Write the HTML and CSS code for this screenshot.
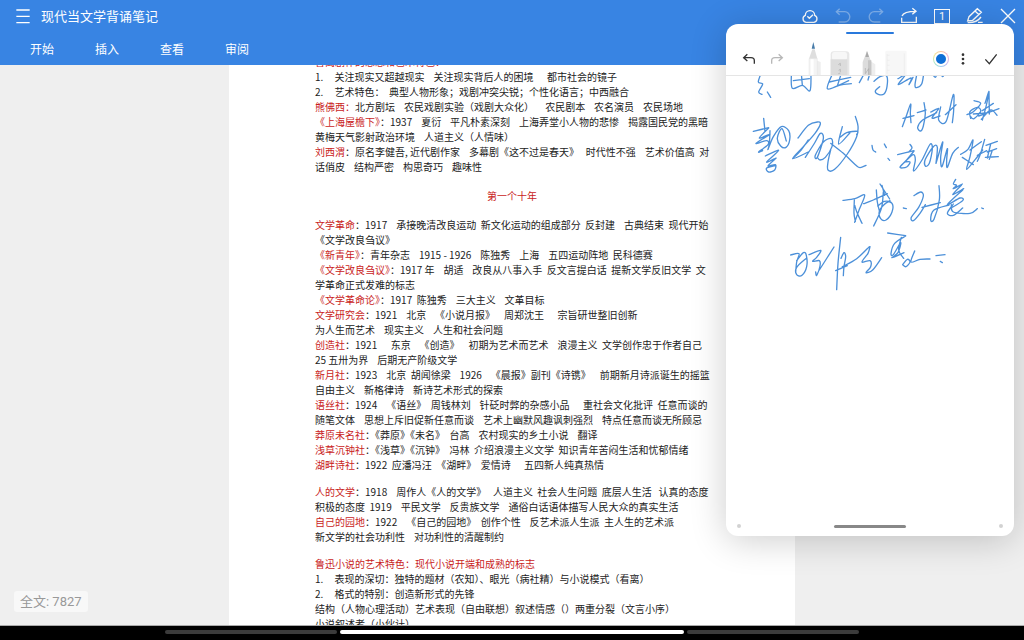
FILE: index.html
```
<!DOCTYPE html>
<html lang="zh-CN">
<head>
<meta charset="utf-8">
<title>现代当文学背诵笔记</title>
<link rel="stylesheet" href="styles.css">
</head>
<body>
<div class="app">
  <header class="header">
    <div class="title-row">
      <button class="icon-btn" aria-label="菜单"><svg viewBox="0 0 54 54"><path d="M7 9H47M7 28H47M7 47H47"/></svg></button>
      <h1 class="title">现代当文学背诵笔记</h1>
      <div class="actions">
        <button class="icon-btn" aria-label="云同步"><svg viewBox="0 0 54 54"><path d="M15 46a11 11 0 0 1-2-21a14 14 0 0 1 28 0a11 11 0 0 1-2 21zM19 28l6 6l11-11"/></svg></button>
        <button class="icon-btn faded" aria-label="撤销"><svg viewBox="0 0 54 54"><path d="M17 5L7 14L17 23M7 14H32a15 15 0 0 1 0 31H14"/></svg></button>
        <button class="icon-btn faded" aria-label="重做"><svg viewBox="0 0 54 54"><path d="M37 5L47 14L37 23M47 14H22a15 15 0 0 0 0 31H40"/></svg></button>
        <button class="icon-btn" aria-label="分享"><svg viewBox="0 0 54 54"><path d="M6 27C10 17 20 13 47 13M37 4L48 13L37 22M5 32V46H49V29"/></svg></button>
        <button class="icon-btn" aria-label="页面"><span class="page-box">1</span></button>
        <button class="icon-btn" aria-label="编辑"><svg viewBox="0 0 54 54"><path d="M5 42L9 29L34 5L46 16L20 40ZM27 12L39 23M5 47C26 48 38 40 45 30M36 46H50"/></svg></button>
        <button class="icon-btn" aria-label="关闭"><svg viewBox="0 0 54 54"><path d="M6 6L48 48M48 6L6 48"/></svg></button>
      </div>
    </div>
    <nav class="tabs">
      <button class="tab">开始</button>
      <button class="tab">插入</button>
      <button class="tab">查看</button>
      <button class="tab">审阅</button>
    </nav>
  </header>

  <main class="workspace">
    <article class="page">
<p><b>曹禺剧作的思想和艺术特色：</b>
1.     关注现实又超越现实    关注现实背后人的困境      都市社会的镜子
2.     艺术特色：  典型人物形象；戏剧冲突尖锐；个性化语言；中西融合
<b>熊佛西：</b>北方剧坛    农民戏剧实验（戏剧大众化）     农民剧本    农名演员    农民场地
<b>《上海屋檐下》</b>：1937    夏衍    平凡朴素深刻    上海弄堂小人物的悲惨    揭露国民党的黑暗
黄梅天气影射政治环境    人道主义（人情味）
<b>刘西渭</b>：原名李健吾, 近代剧作家    多幕剧《这不过是春天》   时代性不强    艺术价值高  对
话俏皮    结构严密    构思奇巧    趣味性</p>
<h2>第一个十年</h2>
<p><b>文学革命</b>：1917    承接晚清改良运动  新文化运动的组成部分  反封建    古典结束  现代开始
《文学改良刍议》
<b>《新青年》</b>：青年杂志    1915 - 1926    陈独秀    上海    五四运动阵地  民科德赛
<b>《文学改良刍议》</b>：1917 年    胡适    改良从八事入手  反文言提白话  提新文学反旧文学  文
学革命正式发难的标志
<b>《文学革命论》</b>：1917  陈独秀    三大主义    文革目标
<b>文学研究会</b>：1921    北京    《小说月报》    周郑沈王      宗旨研世整旧创新
为人生而艺术    现实主义    人生和社会问题
<b>创造社</b>：1921      东京    《创造》    初期为艺术而艺术    浪漫主义  文学创作忠于作者自己
25 五卅为界    后期无产阶级文学
<b>新月社</b>：1923    北京  胡闻徐梁    1926    《晨报》副刊《诗镌》    前期新月诗派诞生的摇篮
自由主义    新格律诗    新诗艺术形式的探索
<b>语丝社</b>：1924    《语丝》  周钱林刘    针砭时弊的杂感小品      重社会文化批评  任意而谈的
随笔文体    思想上斥旧促新任意而谈    艺术上幽默风趣讽刺强烈    特点任意而谈无所顾忌
<b>莽原未名社</b>：《莽原》《未名》  台高    农村现实的乡土小说    翻译
<b>浅草沉钟社</b>：《浅草》《沉钟》  冯林  介绍浪漫主义文学  知识青年苦闷生活和忧郁情绪
<b>湖畔诗社</b>：1922  应潘冯汪  《湖畔》  爱情诗      五四新人纯真热情</p>
<p><b>人的文学</b>：1918    周作人《人的文学》   人道主义  社会人生问题  底层人生活   认真的态度
积极的态度  1919    平民文学    反贵族文学    通俗白话语体描写人民大众的真实生活
<b>自己的园地</b>：1922    《自己的园地》  创作个性    反艺术派人生派  主人生的艺术派
新文学的社会功利性    对功利性的清醒制约</p>
<p><b>鲁迅小说的艺术特色：现代小说开端和成熟的标志</b>
1.     表现的深切：独特的题材（农知）、眼光（病社精）与小说模式（看离）
2.     格式的特别：创造新形式的先锋
结构（人物心理活动）艺术表现（自由联想）叙述情感（）两重分裂（文言小序）
小说叙述者（小伙计）</p>
    </article>
    <div class="word-count">全文: 7827</div>
  </main>

  <footer class="system-bar"><i class="seg"></i><i class="seg active"></i><i class="seg"></i></footer>

  <section class="note" aria-label="手写便签">
    <div class="note-top"><i class="drag"></i></div>
    <div class="toolbar">
      <div class="history">
        <button class="icon-btn dark" aria-label="撤销"><svg viewBox="0 0 54 54"><path d="M22 13L11 23L22 33M11 23H33Q43 23 43 32V41"/></svg></button>
        <button class="icon-btn dark faded" aria-label="重做"><svg viewBox="0 0 54 54"><path d="M32 13L43 23L32 33M43 23H21Q11 23 11 32V41"/></svg></button>
      </div>
      <div class="pens">
        <button class="pen" aria-label="钢笔"><svg viewBox="0 0 81 102"><path fill="#eee" d="M48 55L62 60V102H50z"/><path fill="#dedede" d="M37 22h7l8 28H27z"/><path fill="#f4f4f4" stroke="#ddd" d="M27 50h25v52H27z"/><path fill="#fff" d="M32 52h9v50h-9z"/><path fill="#477ba9" d="M40 0L45 20H35z"/></svg></button>
        <button class="pen" aria-label="橡皮"><svg viewBox="0 0 81 102"><rect x="11" y="28" width="56" height="90" rx="9" fill="#e7e7e7"/><rect x="15" y="30" width="45" height="25" rx="7" fill="#f7f7f7"/><path fill="#dcdcdc" d="M11 52h50v50H11z"/><path fill="none" stroke="#aaa" stroke-width="2" d="M34 68l6-4v8M35 85l5-3v8M34 95l6-2"/></svg></button>
        <button class="pen" aria-label="铅笔"><svg viewBox="0 0 81 102"><path fill="#eee" d="M45 55L64 67V102H50z"/><path fill="#dcdcdc" d="M39 27L52 60V102H26V60z"/><path fill="#aaa" d="M39 27L45 45H34z"/><path fill="#c6c6c6" d="M42 55h10v47H42z"/><path stroke="#aaa" stroke-width="2" fill="none" d="M34 78v17l10-15v18"/></svg></button>
        <button class="pen" aria-label="尺子"><svg viewBox="0 0 81 102"><rect x="13" y="26" width="64" height="90" rx="4" fill="#f7f7f7"/><path stroke="#ececec" stroke-width="2" d="M18 36v60M70 34v64M18 40h8M18 55h8M18 70h8M18 85h8"/></svg></button>
      </div>
      <div class="options">
        <button class="colour" aria-label="颜色"><i></i></button>
        <button class="icon-btn dark narrow" aria-label="更多"><svg viewBox="0 0 24 54"><g fill="#333" stroke="none"><circle cx="12" cy="14" r="4"/><circle cx="12" cy="27" r="4"/><circle cx="12" cy="40" r="4"/></g></svg></button>
        <button class="icon-btn dark" aria-label="完成"><svg viewBox="0 0 54 54"><path d="M10 28L22 41L44 13"/></svg></button>
      </div>
    </div>
    <svg class="ink" viewBox="-42 18 864 1332" role="img" aria-label="手写内容"></svg>
    <div class="note-bottom"><i class="dot"></i><i class="grip"></i><i class="dot"></i></div>
  </section>
</div>
<script src="ink.js"></script>
</body>
</html>
```
FILE: ink.js
```
// Pen strokes as point lists; each is drawn as a smooth curve through its points.
const strokes = [
  // first line, partly scrolled under the toolbar
  "64,8 55,36 68,42 56,66 66,73", "82,66 92,82",
  "154,14 157,55 187,46 210,62 213,10", "184,10 187,46", "160,32 208,26",
  "278,10 262,56 300,45 334,41", "268,36 332,22", "304,10 292,48", "282,52 326,32",
  "372,12 358,38", "389,12 384,30",
  "402,34 420,20 440,18 441,50 432,72 415,73 406,63 419,50",
  "474,26 495,16 475,44 513,24 507,44 519,22",
  "531,10 525,45 530,53 545,42 551,12", "578,14 586,22 590,14", "604,14 608,20 614,12",
  // second line
  "487,170 500,135 512,102 511,130 513,158", "489,145 522,137",
  "532,128 558,120", "552,98 556,130 550,168 542,183 533,172 548,150 590,128",
  "572,126 596,116 576,144 600,138", "602,111 596,150 618,155 640,74 641,120 637,158", "616,134 648,104",
  "681,134 700,125 722,100 702,92", "692,145 690,125 712,112 722,124 702,146 692,140",
  "735,100 747,64 738,110 727,150", "747,66 748,132", "716,138 777,116", "727,122 760,100", "724,148 752,120 771,136", "700,132 745,128",
  // third line
  "71,145 75,184", "40,184 86,173", "86,174 58,204 90,192", "90,193 48,220 80,212 84,224 56,246 68,242",
  "90,182 88,222 84,238 100,200 124,170 146,182 149,210 138,232 122,228 112,204 126,176 139,213",
  "76,258 116,241 80,276 108,264", "108,265 84,288 106,284 104,300 86,306 80,294 108,286",
  "174,204 205,166 232,156 241,162 225,190 190,230 158,266 205,246",
  "205,210 180,244 158,266", "196,262 222,222 241,190 250,206 232,262 226,256 250,216 274,206 276,230 256,262 240,270 232,262",
  "307,170 296,222 330,188", "346,139 354,168 350,200 322,252 284,298 264,300 264,276 272,240",
  "272,220 310,250 346,284 360,293 378,286", "302,201 320,188 352,184 350,194",
  "396,226 399,240 407,246", "433,222 439,233", "444,265 449,271",
  "510,223 516,234 506,246", "473,254 522,242", "522,243 500,270 480,292 500,291 510,276 494,276",
  "500,270 520,254 526,270 521,303 546,270 570,223 577,236 568,280 556,288 556,268 580,230 592,232 588,280",
  "588,280 608,216 602,262 606,290 622,236 620,270 622,292 638,250 655,232",
  "662,253 684,238 699,210 690,260 680,298 706,268 728,240", "667,262 700,284", "690,240 724,215",
  "734,208 722,250 712,274", "712,256 740,242", "738,226 772,214", "752,222 742,264", "742,246 770,236", "736,262 775,260", "756,244 748,268",
  // fourth line
  "309,391 345,386 374,375 358,418 344,457", "343,390 342,430 346,454", "344,406 352,430 366,460",
  "371,401 400,390 442,371", "409,360 412,396 418,422", "430,366 424,416 401,468",
  "413,408 434,394 456,400 456,426 438,450 422,446 418,424 432,404 450,392",
  "420,342 449,387", "426,346 434,376", "490,414 499,416",
  "522,377 542,366 550,378 536,412 514,442 520,452 540,430 556,404",
  "546,412 601,398", "597,347 598,390 582,448 572,450 582,420 627,405",
  "647,328 640,342 650,346 640,356 667,342", "664,346 638,374 671,356", "668,360 622,404 660,384 668,392 630,416",
  "640,402 622,430 640,436 668,414", "634,404 640,426 690,430 712,416", "725,414 730,416",
  // fifth line
  "152,555 177,551 170,576 167,608", "170,572 190,548 199,556 200,590 186,616 170,614 170,592 200,564",
  "207,554 242,541 230,562 218,574 238,572 240,588 230,616 227,606", "238,600 282,531",
  "302,502 294,580 290,659", "287,602 322,587", "303,565 312,548 317,560 312,590 310,617", "307,590 350,566 388,530",
  "390,530 384,550 366,576 390,572 392,590 378,608 398,600 425,563",
  "443,489 497,497", "497,498 464,520 453,550 460,554 482,518 474,548 456,563 492,548", "484,502 476,540 491,565",
  "488,584 502,568 510,576 498,590 488,584", "524,543 513,576 540,568 570,567", "588,557 615,554", "601,574 607,578"
];

function smooth(text) {
  const p = text.split(" ").map(s => s.split(",").map(Number));
  let d = `M${p[0]}`;
  for (let i = 0; i < p.length - 1; i++) {
    const a = p[i - 1] || p[i], b = p[i], c = p[i + 1], e = p[i + 2] || c;
    d += `C${b[0] + (c[0] - a[0]) / 6} ${b[1] + (c[1] - a[1]) / 6} ${c[0] - (e[0] - b[0]) / 6} ${c[1] - (e[1] - b[1]) / 6} ${c[0]} ${c[1]}`;
  }
  return d;
}

const path = document.createElementNS("http://www.w3.org/2000/svg", "path");
path.setAttribute("d", strokes.map(smooth).join(""));
document.querySelector(".ink").append(path);
```
FILE: styles.css
```
* { box-sizing: border-box; }
body {
  margin: 0;
  font-family: "Noto Sans CJK SC", "Noto Sans", sans-serif;
}
button {
  border: 0;
  padding: 0;
  background: none;
  color: inherit;
  font: inherit;
}
.app {
  position: relative;
  display: flex;
  flex-direction: column;
  height: 100vh;
  overflow: hidden;
}
.header {
  background: #3884e3;
  color: #fff;
  flex: none;
}
.title-row {
  display: flex;
  align-items: center;
  height: 32px;
  padding: 0 7px 0 14px;
}
.title {
  margin: 0 0 0 9px;
  font-size: 13px;
  line-height: 20px;
  font-weight: 400;
}
.actions {
  display: flex;
  gap: 15px;
  margin-left: auto;
}
.icon-btn {
  display: flex;
  align-items: center;
  justify-content: center;
  width: 18px;
  height: 18px;
}
.icon-btn svg {
  width: 100%;
  height: 100%;
  fill: none;
  stroke: #fff;
  stroke-width: 4;
}
.icon-btn.dark svg { stroke: #333; }
.icon-btn.faded { opacity: .35; }
.icon-btn.narrow { width: 8px; }
.page-box {
  width: 16px;
  height: 15px;
  border: 1px solid #fff;
  font-family: Roboto, sans-serif;
  font-size: 11px;
  line-height: 13px;
}
.tabs {
  display: flex;
  gap: 41px;
  padding-left: 30px;
}
.tab {
  font-size: 12px;
  line-height: 33px;
}
.workspace {
  position: relative;
  flex: 1;
  min-height: 0;
  overflow: hidden;
  background: #efefef;
}
.page {
  width: 566px;
  margin: -11px auto 0;
  padding: 0 86px;
  background: #fff;
  color: #222;
  font-size: 10px;
  line-height: 15px;
}
.page p {
  margin: 0 0 12px;
  white-space: pre;
}
.page b,
.page h2 {
  color: #c91c1c;
  font-size: 10px;
  font-weight: 400;
}
.page h2 {
  margin: 14px 0;
  text-align: center;
}
.word-count {
  position: absolute;
  left: 14px;
  bottom: 13px;
  padding: 0 6px;
  border-radius: 3px;
  background: #f8f8f8;
  color: #999;
  font-family: Roboto, "Noto Sans CJK SC", sans-serif;
  font-size: 13px;
  line-height: 21px;
}
.system-bar {
  display: flex;
  justify-content: center;
  gap: 3px;
  flex: none;
  height: 15px;
  padding-top: 4px;
  border-top: 1px solid #aaa;
  background: #000;
}
.seg {
  width: 172px;
  height: 4px;
  border-radius: 2px;
  background: #3b3b3b;
}
.seg.active {
  width: 344px;
  background: #fff;
}
.note {
  position: absolute;
  top: 24px;
  right: 10px;
  display: flex;
  flex-direction: column;
  width: 288px;
  border-radius: 12px;
  overflow: hidden;
  background: #fff;
  box-shadow: 0 4px 36px rgba(0, 0, 0, .2);
}
.note-top {
  display: flex;
  justify-content: center;
  height: 18px;
  padding-top: 8px;
}
.drag {
  width: 48px;
  height: 2px;
  border-radius: 1px;
  background: #2979dc;
}
.toolbar {
  display: flex;
  align-items: center;
  gap: 14px;
  height: 34px;
  padding: 0 14px;
  border-bottom: 1px solid #e5e5e5;
}
.history {
  display: flex;
  gap: 10px;
}
.pens { display: flex; }
.pen {
  width: 27px;
  height: 33px;
  overflow: hidden;
}
.pen svg {
  display: block;
  width: 27px;
  height: 34px;
}
.options {
  display: flex;
  align-items: center;
  gap: 10px;
  margin-left: auto;
}
.options .icon-btn:last-child { margin-left: 5px; }
.colour {
  width: 16px;
  height: 16px;
  padding: 1px;
  border-radius: 50%;
  background: conic-gradient(#f7c6a0, #f3b6d4, #c8b4ee, #9fd0f2, #a8e6c3, #f2e79a, #f7c6a0);
}
.colour i {
  display: block;
  height: 14px;
  border: 2px solid #fff;
  border-radius: 50%;
  background: #0f6fd6;
}
.ink {
  display: block;
  width: 100%;
  fill: none;
  stroke: #4c90d9;
  stroke-width: 4;
  stroke-linecap: round;
  stroke-linejoin: round;
}
.note-bottom {
  display: flex;
  align-items: center;
  justify-content: space-between;
  height: 16px;
  padding: 0 11px 4px;
}
.dot {
  width: 4px;
  height: 4px;
  border-radius: 50%;
  background: #d2d2d2;
}
.grip {
  width: 72px;
  height: 3px;
  border-radius: 2px;
  background: #888;
}
```
